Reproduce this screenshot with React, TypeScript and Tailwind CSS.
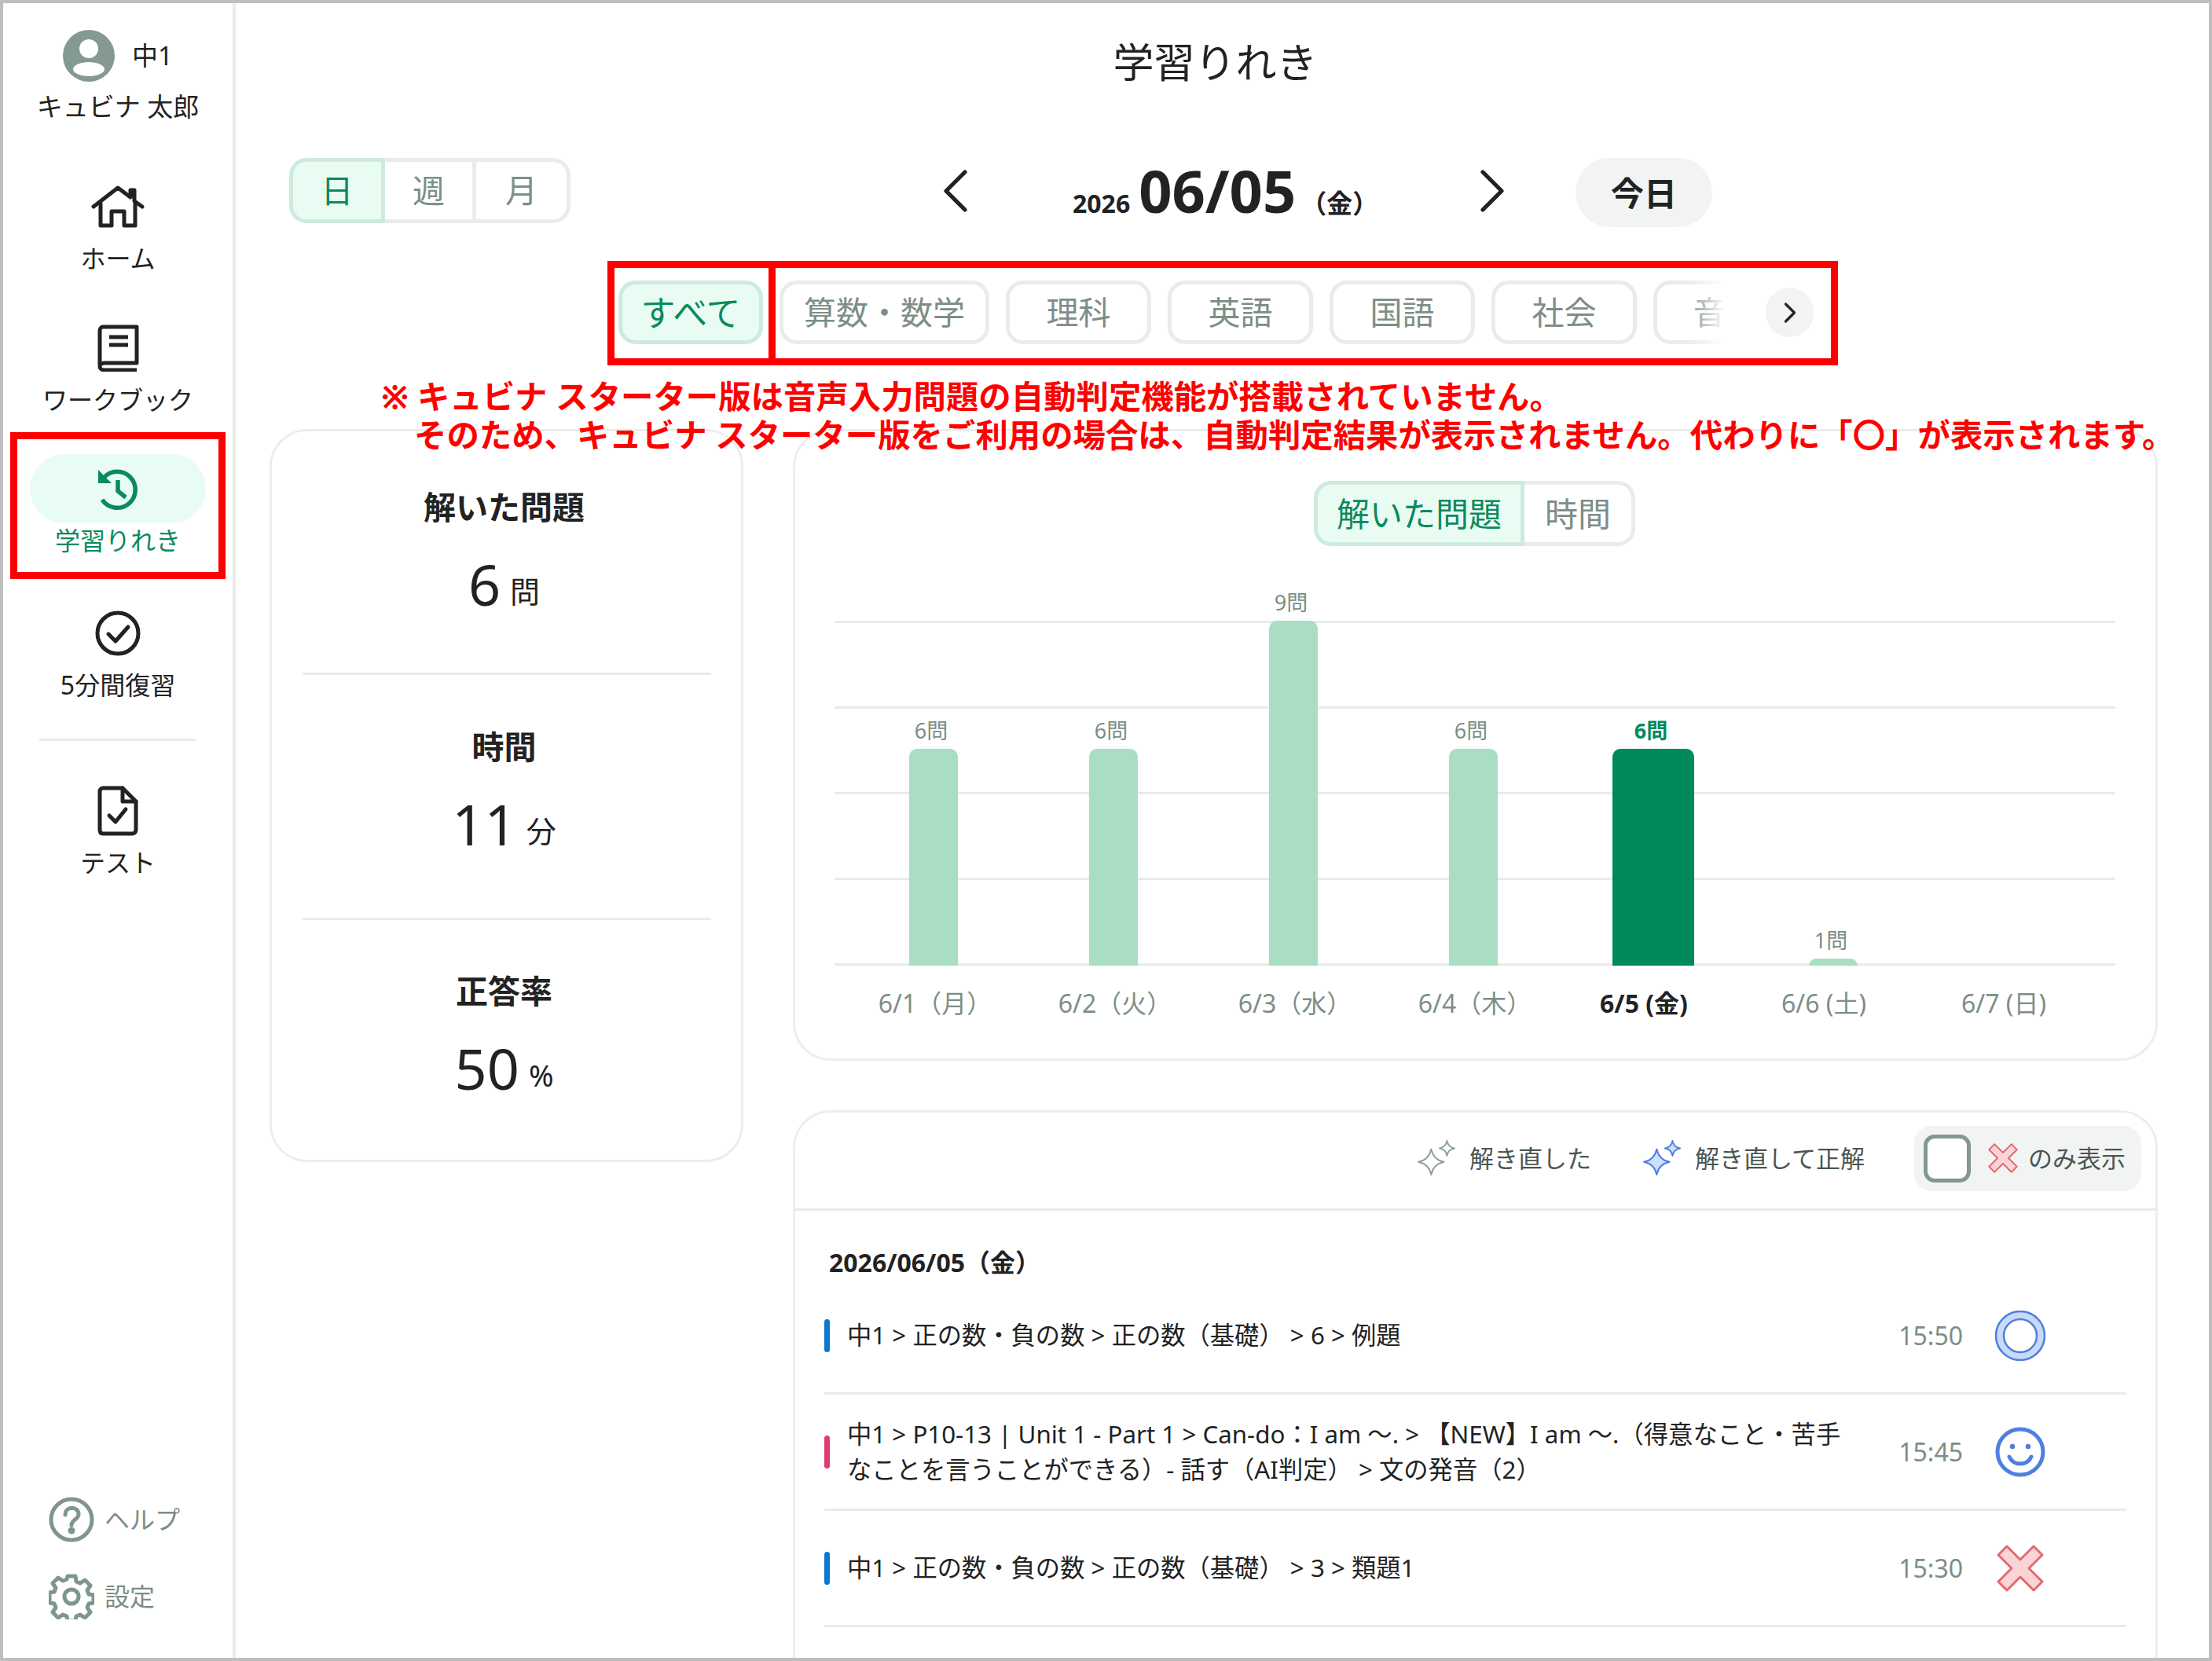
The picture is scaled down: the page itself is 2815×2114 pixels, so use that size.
import React from 'react';
import { ChevronLeft, ChevronRight } from 'lucide-react';

const FONT = "font-['Noto_Sans','Noto_Sans_CJK_JP',sans-serif]";

const HomeIcon = () => (
  <svg viewBox="0 0 68 56" className="w-[68px] h-[56px]" fill="none" stroke="#222" strokeWidth="5" strokeLinecap="round" strokeLinejoin="round">
    <path d="M3 28 34 4l16 12V7h5v14l10 7" />
    <path d="M12 24v28h14V34h16v18h14V24" />
  </svg>
);

const BookIcon = () => (
  <svg viewBox="0 0 54 60" className="w-[54px] h-[60px]" fill="none" stroke="#222" strokeWidth="5" strokeLinejoin="round">
    <path d="M8 3h43v46H10c-8 0-8 9 0 9h41" />
    <path d="M4 52V8c0-3 2-5 4-5" />
    <path d="M16 16h24M16 26h24" />
  </svg>
);

const HistoryIcon = () => (
  <svg viewBox="0 0 60 60" className="w-[60px] h-[60px]" fill="none" stroke="#0a8a5e" strokeWidth="5.5">
    <path d="M12 16a23 23 0 1 1-2 28" />
    <path d="M5 6v17h17z" fill="#0a8a5e" stroke="none" />
    <path d="M30 19v14l10 8" />
  </svg>
);

const CheckCircleIcon = () => (
  <svg viewBox="0 0 58 58" className="w-[58px] h-[58px]" fill="none" stroke="#222" strokeWidth="5" strokeLinecap="round" strokeLinejoin="round">
    <circle cx="29" cy="29" r="26" />
    <path d="m17 30 9 9 16-18" />
  </svg>
);

const TestIcon = () => (
  <svg viewBox="0 0 52 64" className="w-[52px] h-[64px]" fill="none" stroke="#222" strokeWidth="5" strokeLinecap="round" strokeLinejoin="round">
    <path d="M7 3h25l17 17v36c0 3-2 5-5 5H7c-3 0-4-2-4-5V7c0-2 2-4 4-4z" />
    <path d="M32 3v17h17" />
    <path d="m15 38 8 8 13-16" />
  </svg>
);

const HelpIcon = () => (
  <svg viewBox="0 0 58 58" className="w-[58px] h-[58px]" fill="none" stroke="#7f968e" strokeWidth="5" strokeLinecap="round">
    <circle cx="29" cy="29" r="26" />
    <path d="M21 23c0-12 17-11 17-1 0 7-9 7-9 14" />
    <circle cx="29" cy="43" r="2" fill="#7f968e" />
  </svg>
);

const GearIcon = () => (
  <svg viewBox="0 0 58 58" className="w-[58px] h-[58px]" fill="none" stroke="#7f968e" strokeWidth="5" strokeLinejoin="round">
    <path d="M24 3h10l1 7 5 2 6-4 7 7-4 6 2 5 6 1v10l-6 1-2 5 4 6-7 7-6-4-5 2-1 6H24l-1-6-5-2-6 4-7-7 4-6-2-5-6-1V24l6-1 2-5-4-6 7-7 6 4 5-2z" />
    <circle cx="29" cy="29" r="9" />
  </svg>
);

const Avatar = () => (
  <svg viewBox="0 0 66 66" className="w-[66px] h-[66px]">
    <circle cx="33" cy="33" r="33" fill="#84998f" />
    <circle cx="33" cy="24" r="12" fill="#fff" />
    <ellipse cx="33" cy="50" rx="20" ry="9" fill="#fff" />
  </svg>
);

const Sparkle = ({ stroke, fill }: { stroke: string; fill: string }) => (
  <svg viewBox="-1 -1 52 48" className="w-[50px] h-[46px]" stroke={stroke} strokeWidth="2" fill={fill} strokeLinejoin="round">
    <path d="M17 11c2 10 7 15 17 17-10 2-15 7-17 17-2-10-7-15-17-17 10-2 15-7 17-17z" />
    <path d="M38 0c1 6 4 9 10 10-6 1-9 4-10 10-1-6-4-9-10-10 6-1 9-4 10-10z" />
  </svg>
);

const CrossIcon = ({ size }: { size: string }) => (
  <svg viewBox="0 0 60 60" className={size} fill="#fbd5d5" stroke="#e06a70" strokeWidth="3" strokeLinejoin="round">
    <path d="M13 2 30 19 47 2l11 11-17 17 17 17-11 11-17-17-17 17-11-11 17-17L2 13z" />
  </svg>
);

const CircleMark = () => (
  <svg viewBox="0 0 64 64" className="w-[64px] h-[64px]">
    <circle cx="32" cy="32" r="26" fill="none" stroke="#cad9f7" strokeWidth="10" />
    <circle cx="32" cy="32" r="31" fill="none" stroke="#4f7fe0" strokeWidth="2.5" />
    <circle cx="32" cy="32" r="21" fill="none" stroke="#4f7fe0" strokeWidth="2.5" />
  </svg>
);

const SmileMark = () => (
  <svg viewBox="0 0 64 64" className="w-[64px] h-[64px]" fill="none" stroke="#4f7fe0" strokeWidth="5" strokeLinecap="round">
    <circle cx="32" cy="32" r="29" />
    <circle cx="22" cy="25" r="2" fill="#4f7fe0" strokeWidth="2.5" />
    <circle cx="42" cy="25" r="2" fill="#4f7fe0" strokeWidth="2.5" />
    <path d="M18 38c5 12 23 12 28 0" />
  </svg>
);

const NavItem = ({ icon, label, className }: { icon: React.ReactNode; label: string; className: string }) => (
  <div className={`flex flex-col items-center ${className}`}>
    <div className="h-[66px] flex items-center justify-center">{icon}</div>
    <span className="mt-[11px] text-[32px] leading-[44px] text-[#222]">{label}</span>
  </div>
);

const Sidebar = () => (
  <aside className="w-[296px] h-full shrink-0 border-r-[4px] border-[#e8ecea] flex flex-col items-center">
    <div className="mt-[34px] flex items-center gap-[22px]">
      <Avatar />
      <span className="text-[33px] leading-[44px] text-[#222]">中1</span>
    </div>
    <span className="mt-[10px] text-[33px] leading-[44px] text-[#222]">キュビナ 太郎</span>
    <NavItem icon={<HomeIcon />} label="ホーム" className="mt-[72px]" />
    <NavItem icon={<BookIcon />} label="ワークブック" className="mt-[59px]" />
    <div className="mt-[47px] flex flex-col items-center w-[224px]">
      <div className="w-[224px] h-[88px] rounded-full bg-[#e9fcf3] flex items-center justify-center">
        <HistoryIcon />
      </div>
      <span className="text-[32px] leading-[44px] text-[#0a8a5e]">学習りれき</span>
    </div>
    <NavItem icon={<CheckCircleIcon />} label="5分間復習" className="mt-[63px]" />
    <div className="mt-[46px] w-[200px] border-t-[3px] border-[#e8ecea]" />
    <NavItem icon={<TestIcon />} label="テスト" className="mt-[56px]" />
    <div className="mt-auto mb-[49px] w-full pl-[58px] flex flex-col gap-[40px]">
      <div className="flex items-center gap-[13px]">
        <HelpIcon />
        <span className="text-[32px] leading-[44px] text-[#7c8e87]">ヘルプ</span>
      </div>
      <div className="flex items-center gap-[13px]">
        <GearIcon />
        <span className="text-[32px] leading-[44px] text-[#7c8e87]">設定</span>
      </div>
    </div>
  </aside>
);

const SUBJECTS = ['算数・数学', '理科', '英語', '国語', '社会'];

const StatBlock = ({ title, value, unit, className }: { title: string; value: string; unit: string; className: string }) => (
  <div className={`flex flex-col items-center ${className}`}>
    <span className="pr-[6px] text-[41px] leading-[54px] font-bold text-[#222]">{title}</span>
    <div className="mt-[26px] mb-[2px] pr-[6px] h-[90px] flex items-baseline gap-[12px] text-[#222]">
      <span className="text-[72px] leading-[90px]">{value}</span>
      <span className="text-[38px] -translate-y-[4px]">{unit}</span>
    </div>
  </div>
);

const CHART = [
  { label: '6/1（月）', count: '6問', h: 'h-[276px]', shift: true },
  { label: '6/2（火）', count: '6問', h: 'h-[276px]', shift: true },
  { label: '6/3（水）', count: '9問', h: 'h-[439px]', shift: true },
  { label: '6/4（木）', count: '6問', h: 'h-[276px]', shift: true },
  { label: '6/5 (金)', count: '6問', h: 'h-[276px]', active: true },
  { label: '6/6 (土)', count: '1問', h: 'h-[9px]' },
  { label: '6/7 (日)', count: '', h: 'h-0' },
];

const ChartCard = () => (
  <section className="h-[804px] rounded-[48px] border-[3px] border-[#eceeed] flex flex-col items-center">
    <div className="mt-[63px] ml-[-2px] flex h-[83px]">
      <div className="w-[268px] rounded-l-[22px] border-[5px] border-[#cdebdd] bg-[#e9fcf3] flex items-center justify-center text-[42px] text-[#0a8a5e]">解いた問題</div>
      <div className="w-[141px] rounded-r-[22px] border-y-[5px] border-r-[5px] border-[#e8ecea] flex items-center justify-center text-[42px] text-[#7c8e87]">時間</div>
    </div>
    <div className="mt-[95px] w-[1630px] ml-[-2px] h-[439px] relative">
      <div className="absolute inset-0 flex flex-col justify-between">
        <div className="border-t-[3px] border-[#e8ecea]" />
        <div className="border-t-[3px] border-[#e8ecea]" />
        <div className="border-t-[3px] border-[#e8ecea]" />
        <div className="border-t-[3px] border-[#e8ecea]" />
        <div className="border-t-[3px] border-[#e8ecea]" />
      </div>
      <div className="absolute inset-0 pl-[12px] grid grid-cols-[repeat(7,229px)] grid-rows-[439px] items-end">
        {CHART.map(d => (
          <div key={d.label} className="flex flex-col items-center">
            <span className={`mr-[6px] mb-[6px] text-[27px] leading-[34px] ${d.active ? 'font-bold text-[#008a5a]' : 'text-[#7c8e87]'}`}>{d.count}</span>
            <div className={`${d.h} ${d.active ? 'w-[104px] bg-[#008a5a]' : 'w-[62px] bg-[#a9dec3]'} rounded-t-[10px]`} />
          </div>
        ))}
      </div>
    </div>
    <div className="mt-[26px] w-[1630px] ml-[-2px] grid grid-cols-[repeat(7,229px)]">
      {CHART.map(d => (
        <span key={d.label} className={`text-center text-[32px] leading-[44px] ${d.shift ? 'pl-[28px]' : ''} ${d.active ? 'font-bold text-[#222]' : 'text-[#7c8e87]'}`}>{d.label}</span>
      ))}
    </div>
  </section>
);

const Row = ({ color, time, mark, children }: { color: string; time: string; mark: React.ReactNode; children: React.ReactNode }) => (
  <div className="h-[148px] border-b-[3px] border-[#e8ecea] flex items-center">
    <div className={`w-[7px] h-[42px] rounded-full ${color}`} />
    <div className="ml-[22px] w-[1336px] text-[31.3px] leading-[45px] text-[#222]">{children}</div>
    <span className="w-[84px] text-right text-[32px] text-[#7c8e87]">{time}</span>
    <div className="ml-[41px] w-[64px] flex justify-center">{mark}</div>
  </div>
);

const ListCard = () => (
  <section className="mt-[63px] h-[900px] rounded-t-[48px] border-[3px] border-[#eceeed]">
    <div className="h-[125px] pb-[6px] border-b-[3px] border-[#e8ecea] flex items-center justify-end pr-[18px] gap-[66px]">
      <div className="flex items-center gap-[16px]">
        <Sparkle stroke="#8fa39b" fill="#fff" />
        <span className="text-[31px] text-[#4a5652]">解き直した</span>
      </div>
      <div className="flex items-center gap-[16px]">
        <Sparkle stroke="#4f7fe0" fill="#cfe0fb" />
        <span className="text-[31px] text-[#4a5652]">解き直して正解</span>
      </div>
      <div className="ml-[-3px] w-[289px] h-[83px] rounded-[22px] bg-[#f2f4f3] flex items-center pl-[12px]">
        <div className="w-[60px] h-[61px] rounded-[14px] border-[5px] border-[#829890] bg-white" />
        <div className="ml-[22px] flex items-center gap-[13px]">
          <CrossIcon size="w-[38px] h-[38px]" />
          <span className="text-[31px] text-[#4a5652]">のみ表示</span>
        </div>
      </div>
    </div>
    <div className="pl-[37px] pr-[37px]">
      <div className="pt-[45px] pl-[6px] text-[32px] leading-[41px] font-bold text-[#222]">2026/06/05（金）</div>
      <Row color="bg-[#0a78d0]" time="15:50" mark={<CircleMark />}>中1 &gt; 正の数・負の数 &gt; 正の数（基礎） &gt; 6 &gt; 例題</Row>
      <Row color="bg-[#e03a72]" time="15:45" mark={<SmileMark />}>
        中1 &gt; P10-13 | Unit 1 - Part 1 &gt; Can-do：I am ～. &gt; 【NEW】I am ～.（得意なこと・苦手<br />なことを言うことができる）- 話す（AI判定） &gt; 文の発音（2）
      </Row>
      <Row color="bg-[#0a78d0]" time="15:30" mark={<CrossIcon size="w-[60px] h-[60px]" />}>中1 &gt; 正の数・負の数 &gt; 正の数（基礎） &gt; 3 &gt; 類題1</Row>
    </div>
  </section>
);

const Main = () => (
  <main className="flex-1 min-w-0 pl-[43px] pr-[61px]">
    <h1 className="h-[138px] pt-[37px] text-center text-[52px] leading-[76px] text-[#222]">学習りれき</h1>
    <div className="mt-[59px] pl-[25px] h-[88px] flex items-start">
      <div className="flex h-[83px]">
        <div className="w-[122px] rounded-l-[22px] border-[5px] border-[#cdebdd] bg-[#e9fcf3] flex items-center justify-center text-[41px] text-[#0a8a5e]">日</div>
        <div className="w-[116px] border-y-[5px] border-r-[5px] border-[#e8ecea] flex items-center justify-center text-[41px] text-[#7c8e87]">週</div>
        <div className="w-[120px] rounded-r-[22px] border-y-[5px] border-r-[5px] border-[#e8ecea] flex items-center justify-center text-[41px] text-[#7c8e87]">月</div>
      </div>
      <div className="ml-[442px] h-[83px] flex items-center">
        <ChevronLeft className="w-[96px] h-[96px] text-[#222]" strokeWidth={1.3} />
      </div>
      <div className="ml-[101px] h-[83px] w-[420px] flex items-baseline font-bold text-[#222]">
        <span className="text-[32px] leading-[84px]">2026</span>
        <span className="ml-[11px] text-[74px] leading-[84px]">06/05</span>
        <span className="ml-[6px] text-[33px] leading-[84px]">（金）</span>
      </div>
      <div className="ml-[66px] h-[83px] flex items-center">
        <ChevronRight className="w-[96px] h-[96px] text-[#222]" strokeWidth={1.3} />
      </div>
      <div className="ml-[58px] w-[174px] h-[88px] rounded-full bg-[#f2f4f3] flex items-center justify-center text-[42px] font-bold text-[#222]">今日</div>
    </div>
    <div className="mt-[68px] ml-[444px] h-[81px] flex items-center">
      <div className="relative w-[1408px] overflow-hidden flex gap-[21px]">
        <div className="w-[184px] h-[81px] shrink-0 rounded-[22px] border-[5px] border-[#cdebdd] bg-[#e9fcf3] flex items-center justify-center text-[44px] text-[#0a8a5e]">すべて</div>
        {SUBJECTS.map((s, i) => (
          <div key={s} className={`${i === 0 ? 'w-[267px]' : 'w-[185px]'} h-[81px] shrink-0 rounded-[22px] border-[5px] border-[#e8ecea] flex items-center justify-center text-[41px] text-[#7c8e87]`}>{s}</div>
        ))}
        <div className="w-[185px] h-[81px] shrink-0 rounded-[22px] border-[5px] border-[#e8ecea] flex items-center pl-[46px] text-[41px] text-[#7c8e87]">音</div>
        <div className="absolute right-0 top-0 bottom-0 w-[48px] bg-gradient-to-r from-transparent to-white" />
      </div>
      <div className="ml-[52px] w-[61px] h-[63px] rounded-full bg-[#f2f4f3] flex items-center justify-center">
        <ChevronRight className="w-[44px] h-[44px] text-[#222]" strokeWidth={1.8} />
      </div>
    </div>
    <div className="mt-[108px] flex gap-[63px]">
      <section className="w-[603px] h-[933px] shrink-0 rounded-[48px] border-[3px] border-[#eceeed] flex flex-col items-center">
        <StatBlock title="解いた問題" value="6" unit="問" className="mt-[69px]" />
        <div className="mt-[66px] w-[520px] border-t-[3px] border-[#e8ecea]" />
        <StatBlock title="時間" value="11" unit="分" className="mt-[64px]" />
        <div className="mt-[73px] w-[520px] border-t-[3px] border-[#e8ecea]" />
        <StatBlock title="正答率" value="50" unit="%" className="mt-[63px]" />
      </section>
      <div className="w-[1737px] shrink-0">
        <ChartCard />
        <ListCard />
      </div>
    </div>
  </main>
);

export default function App() {
  return (
    <div className={`relative w-[2815px] h-[2114px] overflow-hidden bg-white border-[4px] border-[#bfbfbf] flex ${FONT}`}>
      <Sidebar />
      <Main />
      <div className="absolute left-[9px] top-[546px] w-[274px] h-[187px] border-[9px] border-[#ff0000]" />
      <div className="absolute left-[769px] top-[328px] w-[1566px] h-[133px] border-[9px] border-[#ff0000]" />
      <div className="absolute left-[974px] top-[328px] w-[9px] h-[133px] bg-[#ff0000]" />
      <div className="absolute left-[481px] top-[476px] text-[41.4px] leading-[49px] font-bold text-[#ff0000] whitespace-nowrap">
        <div>※ キュビナ スターター版は音声入力問題の自動判定機能が搭載されていません。</div>
        <div className="pl-[42px]">そのため、キュビナ スターター版をご利用の場合は、自動判定結果が表示されません。代わりに「〇」が表示されます。</div>
      </div>
    </div>
  );
}
